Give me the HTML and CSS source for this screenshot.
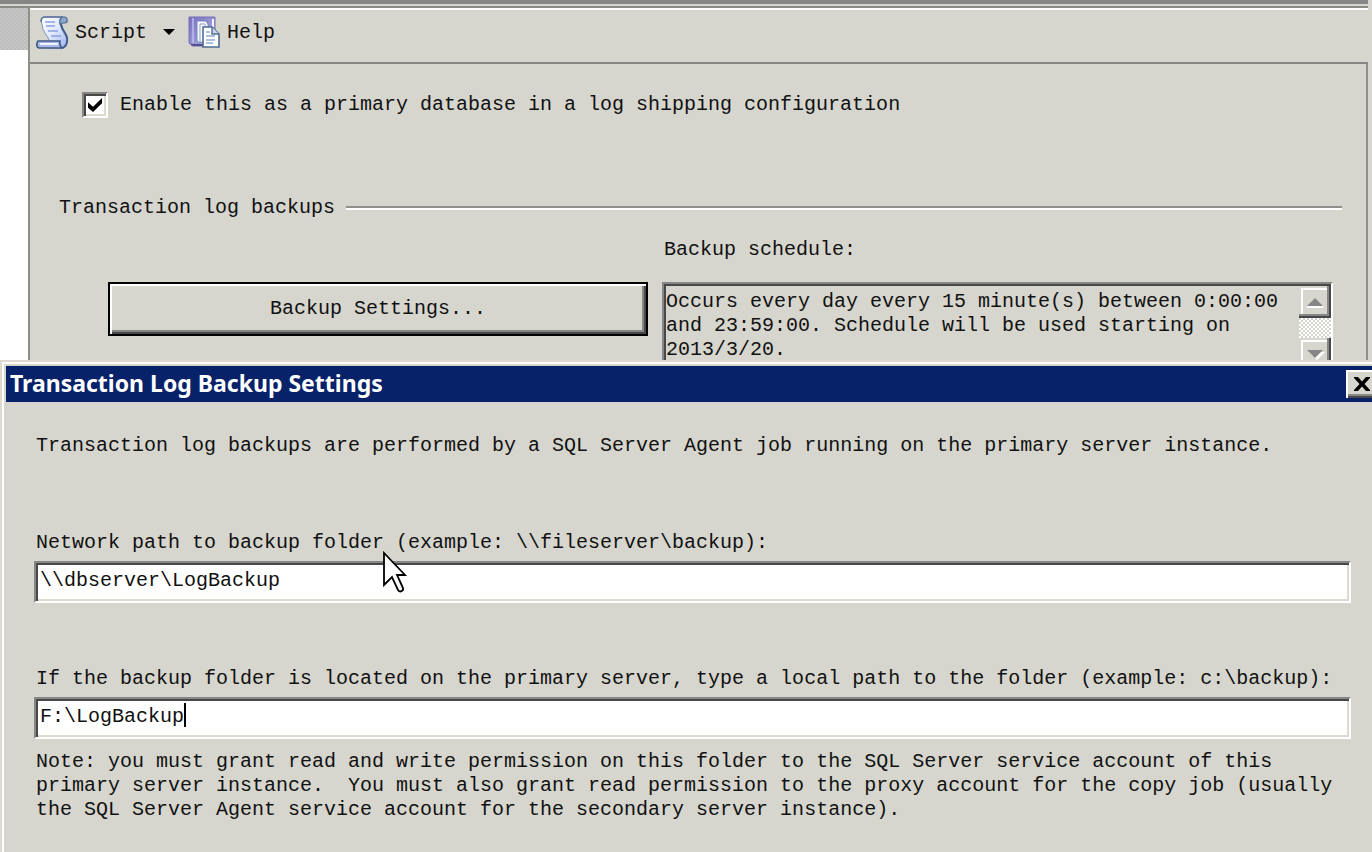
FILE: index.html
```html
<!DOCTYPE html>
<html lang="en">
<head>
    <meta charset="utf-8">
    <title>Transaction Log Backup Settings</title>
    <link rel="stylesheet" href="styles.css">
</head>
<body>
    <div class="window">
        <div class="side">
            <div class="side-head"></div>
        </div>

        <main class="main">
            <div class="toolbar">
                <button type="button" class="tool">
                    <svg class="icon" width="32" height="34" viewBox="0 0 32 34">
                        <defs>
                            <linearGradient id="paper" x1="0" y1="0" x2="1" y2="1">
                                <stop offset="0" stop-color="#ffffff"/>
                                <stop offset="0.5" stop-color="#dfe8ff"/>
                                <stop offset="1" stop-color="#9db2ec"/>
                            </linearGradient>
                        </defs>
                        <path d="M7 2h20q-4 3-3 7 1 5 4 9t3 8q0 6-5 7H13v-8q-1-3-4-7T6 9Q4 4 7 2z" fill="url(#paper)" stroke="#7f92bd" stroke-width="1"/>
                        <path d="M5 7q0-5 4-5h18" fill="none" stroke="#5b7098" stroke-width="1.6"/>
                        <path d="M24 9q-1-5 2-7h3q3 1 2 5l-2 1h-2z" fill="#8ea6cc" stroke="#4d6c90" stroke-width="1.2"/>
                        <path d="M25 9q1 5 4 9t2 9q-1 5-5 6" fill="none" stroke="#3c5987" stroke-width="1.8"/>
                        <path d="M2 26h22q-1 4 2 7H3q-3-1-2-5z" fill="#a8b9e4" stroke="#3f5886" stroke-width="1.6"/>
                        <path d="M4 28h18v2H4z" fill="#eff3ff"/>
                        <path d="M9 7h10M10 11h9M12 16h10M15 21h10" stroke="#8aa0e0" stroke-width="1.5"/>
                    </svg>
                    <span>Script</span>
                    <span class="arrow"></span>
                </button>
                <button type="button" class="tool">
                    <svg class="icon" width="32" height="34" viewBox="0 0 32 34">
                        <defs>
                            <linearGradient id="book" x1="0" y1="0" x2="1" y2="1">
                                <stop offset="0" stop-color="#776dbf"/>
                                <stop offset="1" stop-color="#b4b8ec"/>
                            </linearGradient>
                        </defs>
                        <path d="M1 2h26v25l-5 4H4l-3-3z" fill="url(#book)" stroke="#7771b5"/>
                        <path d="M5 3v25" stroke="#c0c0f0" stroke-width="1.5"/>
                        <path d="M2 28l3 3h10v-2H4z" fill="#504e8c"/>
                        <path d="M9 6h9l2 3v17l-8 2-3-2z" fill="#f7f9ff" stroke="#7287bb"/>
                        <path d="M12 9h5v18h-5z" fill="#fff" stroke="#8c9cc8"/>
                        <path d="M24 4h2v8h-2z" fill="#f3f5ff"/>
                        <path d="M15 12h9l7 7v13H15z" fill="#fff" stroke="#4f6c91" stroke-width="1.6"/>
                        <path d="M24 12v7h7" fill="#c7d8ec" stroke="#4f6c91" stroke-width="1.4"/>
                        <path d="M18 17h4M18 21h9M18 25h9M18 28h7" stroke="#91add0" stroke-width="1.4"/>
                    </svg>
                    <span>Help</span>
                </button>
            </div>

            <div class="panel">
                <div class="enable">
                    <input type="checkbox" id="enable" class="check" checked>
                    <label for="enable">Enable this as a primary database in a log shipping configuration</label>
                </div>

                <h2 class="group">Transaction log backups</h2>

                <div class="backup">
                    <label for="schedule" class="schedule-label">Backup schedule:</label>
                    <button type="button" class="settings">Backup Settings...</button>
                    <div class="schedule">
                        <textarea id="schedule" class="schedule-text" readonly>Occurs every day every 15 minute(s) between 0:00:00 and 23:59:00. Schedule will be used starting on 2013/3/20.</textarea>
                        <div class="scrollbar">
                            <button type="button" class="scroll" aria-label="Scroll up"><span class="up"></span></button>
                            <button type="button" class="scroll" aria-label="Scroll down"><span class="down"></span></button>
                        </div>
                    </div>
                </div>
            </div>
        </main>
    </div>

    <section class="dialog">
        <header class="titlebar">
            <h1>Transaction Log Backup Settings</h1>
            <button type="button" class="close" aria-label="Close">
                <svg width="16" height="14" viewBox="0 0 16 14">
                    <path d="M0 0h4l4 4.500 4-4.500h4v1l-5.500 6 5.500 6v1h-4L8 9.500 4 14H0v-1l5.500-6L0 1z" fill="#000"/>
                </svg>
            </button>
        </header>

        <div class="content">
            <p class="intro">Transaction log backups are performed by a SQL Server Agent job running on the primary server instance.</p>

            <div class="row">
                <label for="network">Network path to backup folder (example: \\fileserver\backup):</label>
                <input type="text" id="network" class="field" value="\\dbserver\LogBackup">
            </div>

            <div class="row">
                <label for="local">If the backup folder is located on the primary server, type a local path to the folder (example: c:\backup):</label>
                <div class="edit">
                    <input type="text" id="local" class="field" value="F:\LogBackup">
                    <span class="caret"></span>
                </div>
            </div>

            <p class="note">Note: you must grant read and write permission on this folder to the SQL Server service account of this primary server instance.&nbsp; You must also grant read permission to the proxy account for the copy job (usually the SQL Server Agent service account for the secondary server instance).</p>
        </div>

        <svg class="cursor" width="26" height="44" viewBox="0 0 26 44">
            <path d="M2 2v32l8-8 6 13q2 3 5 0v-2l-6-13h8z" fill="#fff" stroke="#000" stroke-width="1.8"/>
        </svg>
    </section>
</body>
</html>
```
FILE: styles.css
```css
*, *::before, *::after {
    box-sizing: border-box;
}

body {
    margin: 0;
    min-height: 100vh;
    display: flex;
    flex-direction: column;
    background: #d6d6ce;
    color: #111;
    font: 20px/24px "Liberation Mono", monospace;
    overflow: hidden;
}

button, input, textarea {
    margin: 0;
    padding: 0;
    border: 0;
    border-radius: 0;
    background: #d6d6ce;
    color: inherit;
    font: inherit;
}

h1, h2, p {
    margin: 0;
    font-size: 20px;
    font-weight: normal;
}

/* Main window */
.window {
    display: flex;
    border-top: 4px solid #868686;
    padding-top: 2px;
    margin-right: 4px;
}

.side {
    width: 30px;
    border-top: 2px solid #8a8a86;
    border-right: 2px solid #8e8e8e;
    background: #fff;
}

.side-head {
    height: 42px;
    background: repeating-conic-gradient(#bcbcbc 0 25%, #c6c6c6 0 50%) 0 0 / 4px 4px;
}

.main {
    flex: 1;
    border-top: 2px solid #8a8a86;
}

.toolbar {
    display: flex;
    gap: 13px;
    padding: 5px 6px 13px;
    border-top: 2px solid #fff;
}

.tool {
    display: flex;
    align-items: center;
    gap: 7px;
}

.tool span {
    margin-top: 2px;
}

.tool .arrow {
    margin: 0 0 0 9px;
    border: 6px solid transparent;
    border-top-color: #000;
    border-bottom: 0;
}

.panel {
    border-top: 2px solid #868682;
    border-right: 2px solid #8e8e8a;
    padding: 28px 24px 0 29px;
}

.enable {
    display: flex;
    align-items: center;
    gap: 12px;
    padding-left: 23px;
}

.check {
    appearance: none;
    width: 26px;
    height: 26px;
    background: #fff;
    border: 2px solid;
    border-color: #868686 #fff #fff #868686;
    box-shadow: inset 2px 2px #484848, inset -2px -2px #dedad2;
}

.check:checked::before {
    content: "";
    display: block;
    width: 14px;
    height: 14px;
    margin: 4px;
    background: #000;
    clip-path: polygon(0 30%, 36% 62%, 100% 0, 100% 38%, 36% 100%, 0 70%);
}

.group {
    display: flex;
    align-items: center;
    gap: 11px;
    margin-top: 78px;
}

.group::after {
    content: "";
    flex: 1;
    height: 4px;
    border-top: 2px solid #8e8e8a;
    border-bottom: 2px solid #fff;
}

.backup {
    display: grid;
    grid-template-columns: 540fr 671fr;
    column-gap: 14px;
    row-gap: 20px;
    padding: 18px 9px 0 49px;
}

.schedule-label {
    grid-column: 2;
    padding-left: 2px;
}

.settings {
    height: 54px;
    border: 2px solid #000;
    box-shadow: inset 2px 2px #fff, inset -2px -2px #484848, inset -4px -4px #868686;
}

/* the lower part of the box runs under the dialog */
.schedule {
    display: flex;
    height: 78px;
    padding: 2px 0 0 2px;
    border: 2px solid;
    border-bottom: 0;
    border-color: #868686 #fff #fff #868686;
    box-shadow: inset 2px 2px #484848;
    overflow: hidden;
}

.schedule-text {
    flex: 1;
    padding-top: 4px;
    resize: none;
    overflow: hidden;
    outline: 0;
}

.scrollbar {
    display: flex;
    flex-direction: column;
    gap: 20px;
    width: 32px;
    background: repeating-conic-gradient(#fff 0 25%, #d6d6ce 0 50%) 0 0 / 4px 4px;
}

.scroll {
    display: flex;
    flex: none;
    align-items: center;
    justify-content: center;
    height: 32px;
    box-shadow: inset -2px -2px #484848, inset -4px -4px #868686, inset 2px 2px #d6d6ce, inset 4px 4px #fff;
}

.up, .down {
    border: 8px solid transparent;
}

.up {
    border-top: 0;
    border-bottom-color: #868686;
    box-shadow: 0 2px #fff;
}

.down {
    border-bottom: 0;
    border-top-color: #868686;
    filter: drop-shadow(2px 2px #fff);
}

/* Dialog */
.dialog {
    position: relative;
    flex: 1;
    padding: 4px 0 0 4px;
    border-top: 2px solid #dedad2;
    border-left: 2px solid #dedad2;
    box-shadow: inset 2px 2px #fff;
}

.titlebar {
    display: flex;
    align-items: center;
    justify-content: space-between;
    height: 36px;
    padding-left: 4px;
    background: #08226a;
    color: #fff;
}

.titlebar h1 {
    padding-bottom: 2px;
    font: bold 23px/28px "Noto Sans", sans-serif;
}

.close {
    display: flex;
    align-items: center;
    justify-content: center;
    width: 26px;
    height: 28px;
    padding-left: 6px;
    box-shadow: inset 2px 2px #fff, inset 0 -2px #484848, inset 0 -4px #868686;
}

.content {
    padding: 32px 21px 24px 28px;
}

.intro, .row label {
    display: block;
    padding-left: 2px;
}

.intro {
    margin-bottom: 73px;
}

.row label {
    margin-bottom: 6px;
}

.field {
    display: block;
    width: 100%;
    height: 42px;
    padding: 0 4px 4px;
    background: #fff;
    border: 2px solid;
    border-color: #868686 #fff #fff #868686;
    box-shadow: inset 2px 2px #484848, inset -2px -2px #dedad2;
}

.row + .row {
    margin-top: 64px;
}

.edit {
    position: relative;
}

.caret {
    position: absolute;
    left: 150px;
    top: 6px;
    width: 2px;
    height: 24px;
    background: #000;
}

.note {
    margin-top: 11px;
    padding-left: 2px;
}

.cursor {
    position: absolute;
    left: 380px;
    top: 189px;
}
```
